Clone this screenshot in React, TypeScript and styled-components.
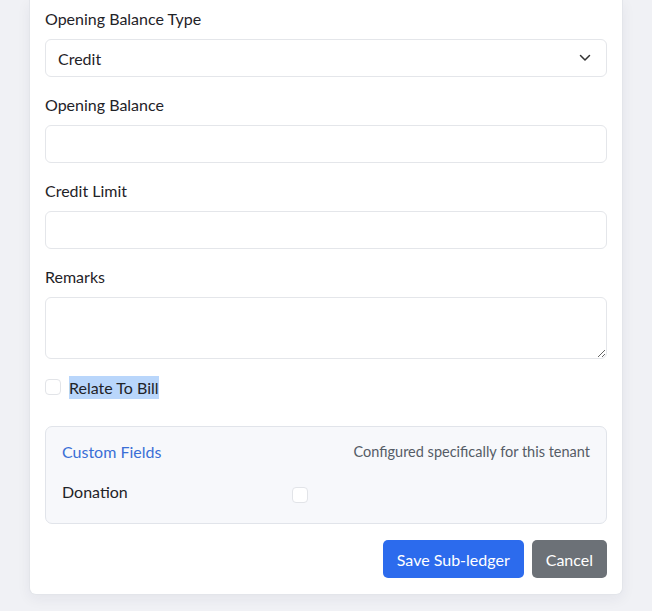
import React from 'react';
import styled, { createGlobalStyle } from 'styled-components';

const GlobalStyle = createGlobalStyle`
    html, body {
        margin: 0;
        padding: 0;
        background-color: #f0f1f5;
        font-family: Lato, "Noto Sans", sans-serif;
        color: #1f2328;
    }
    * {
        box-sizing: border-box;
    }
`;

const Page = styled.div`
    width: 652px;
    height: 611px;
    padding: 0 29px 0 29px;
    overflow: hidden;
`;

const Card = styled.div`
    background-color: #ffffff;
    border: 1px solid #e3e5ea;
    border-top: none;
    border-radius: 0 0 7px 7px;
    box-shadow: 0 4px 14px rgba(30, 40, 60, 0.06);
    padding: 7px 15px 16px 15px;
    width: 594px;
`;

const Field = styled.div`
    display: flex;
    flex-direction: column;
    margin-bottom: 16px;
`;

const Label = styled.label`
    font-size: 16px;
    line-height: 24px;
    color: #1f2328;
    margin-bottom: 8px;
`;

const SelectBox = styled.div`
    display: flex;
    align-items: center;
    justify-content: space-between;
    height: 38px;
    border: 1px solid #e4e6ea;
    border-radius: 6px;
    padding: 0 15px 0 12px;
    font-size: 16px;
    color: #1f2328;
`;

const Input = styled.input`
    height: 38px;
    border: 1px solid #e4e6ea;
    border-radius: 6px;
    padding: 0 12px;
    font-size: 16px;
    font-family: inherit;
    outline: none;
`;

const TextArea = styled.textarea`
    height: 62px;
    border: 1px solid #e4e6ea;
    border-radius: 6px;
    padding: 8px 12px;
    font-size: 16px;
    font-family: inherit;
    outline: none;
    resize: vertical;
`;

const CheckRow = styled.div`
    display: flex;
    align-items: center;
    gap: 8px;
    height: 24px;
    margin-top: 12px;
    margin-bottom: 27px;
`;

const Box = styled.span`
    display: inline-block;
    width: 16px;
    height: 16px;
    border: 1px solid #e2e4e8;
    border-radius: 4px;
    background-color: #ffffff;
`;

const Selected = styled.span`
    font-size: 16px;
    line-height: 23px;
    background-color: #b9d6fb;
    color: #1f2328;
`;

const CustomPanel = styled.div`
    background-color: #f7f8fb;
    border: 1px solid #e1e4ea;
    border-radius: 7px;
    padding: 12px 16px 20px 16px;
`;

const PanelHead = styled.div`
    display: flex;
    justify-content: space-between;
    align-items: center;
    height: 24px;
    margin-bottom: 16px;
`;

const PanelTitle = styled.span`
    font-size: 16px;
    color: #3a6fd6;
`;

const PanelNote = styled.span`
    font-size: 14.5px;
    color: #555c66;
`;

const CustomRow = styled.div`
    display: grid;
    grid-template-columns: 230px 1fr;
    align-items: center;
    height: 24px;
`;

const RowLabel = styled.span`
    font-size: 16px;
    color: #1f2328;
`;

const RowBox = styled(Box)`
    margin-top: 8px;
`;

const Actions = styled.div`
    display: flex;
    justify-content: flex-end;
    gap: 8px;
    margin-top: 16px;
`;

const Button = styled.button<{ $variant: 'primary' | 'secondary' }>`
    height: 38px;
    padding: 0 14px;
    border: none;
    border-radius: 5px;
    font-size: 16px;
    font-family: inherit;
    color: #ffffff;
    background-color: ${p => (p.$variant === 'primary' ? '#2c6bed' : '#6c7177')};
`;

function Chevron() {
    return (
        <svg width="12" height="8" viewBox="0 0 12 8" fill="none">
            <polyline points="1.5,1.5 6,6 10.5,1.5" stroke="#333" strokeWidth="1.5" strokeLinecap="round" strokeLinejoin="round" />
        </svg>
    );
}

export default function App() {
    return (
        <Page>
            <GlobalStyle />
            <Card>
                <Field>
                    <Label>Opening Balance Type</Label>
                    <SelectBox>
                        <span>Credit</span>
                        <Chevron />
                    </SelectBox>
                </Field>
                <Field>
                    <Label>Opening Balance</Label>
                    <Input type="text" />
                </Field>
                <Field>
                    <Label>Credit Limit</Label>
                    <Input type="text" />
                </Field>
                <Field>
                    <Label>Remarks</Label>
                    <TextArea />
                </Field>
                <CheckRow>
                    <Box />
                    <Selected>Relate To Bill</Selected>
                </CheckRow>
                <CustomPanel>
                    <PanelHead>
                        <PanelTitle>Custom Fields</PanelTitle>
                        <PanelNote>Configured specifically for this tenant</PanelNote>
                    </PanelHead>
                    <CustomRow>
                        <RowLabel>Donation</RowLabel>
                        <RowBox />
                    </CustomRow>
                </CustomPanel>
                <Actions>
                    <Button $variant="primary">Save Sub-ledger</Button>
                    <Button $variant="secondary">Cancel</Button>
                </Actions>
            </Card>
        </Page>
    );
}
